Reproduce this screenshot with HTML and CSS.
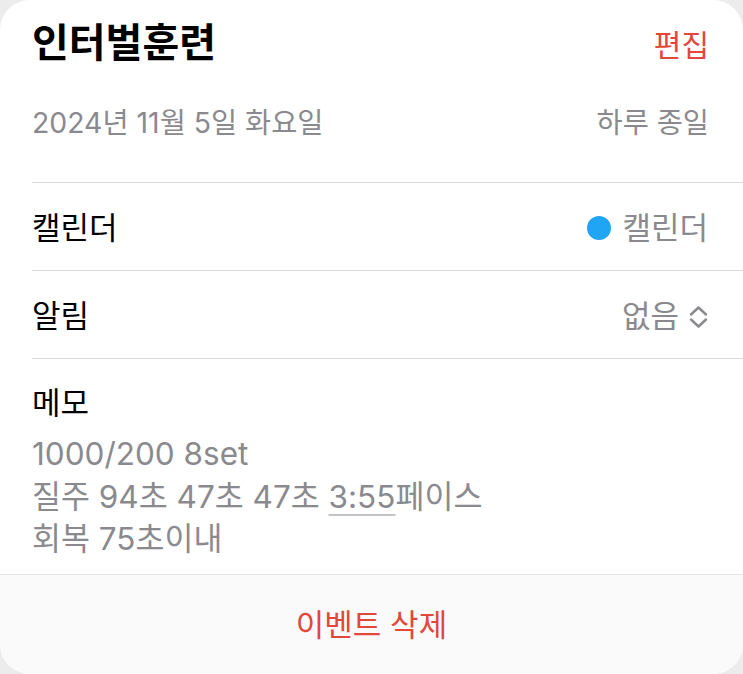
FILE: index.html
```html
<!DOCTYPE html>
<html lang="ko">
<head>
<meta charset="utf-8">
<link rel="stylesheet" href="styles.css">
</head>
<body>
<div class="sheet">
  <header class="head">
    <div class="title-row">
      <h1 class="title">인터벌훈련</h1>
      <span class="edit">편집</span>
    </div>
    <div class="date-row">
      <span>2024년 11월 5일 화요일</span>
      <span>하루 종일</span>
    </div>
  </header>
  <div class="list">
    <div class="row">
      <span class="label">캘린더</span>
      <span class="value"><span class="dot"></span>캘린더</span>
    </div>
    <div class="row">
      <span class="label">알림</span>
      <span class="value">없음<svg class="chev" viewBox="0 0 19 24" width="19" height="24"><path d="M2 9.5 L9.5 2.5 L17 9.5 M2 14.5 L9.5 21.5 L17 14.5" fill="none" stroke="#8a8a8e" stroke-width="2.4" stroke-linecap="round" stroke-linejoin="round"/></svg></span>
    </div>
    <div class="memo">
      <div class="label memo-label">메모</div>
      <div class="memo-text">
        <div>1000/200 8set</div>
        <div>질주 94초 47초 47초 <span class="u">3:55</span>페이스</div>
        <div>회복 75초이내</div>
      </div>
    </div>
  </div>
  <div class="footer">
    <span class="delete">이벤트 삭제</span>
  </div>
</div>
</body>
</html>
```

FILE: styles.css
```css
* { box-sizing: border-box; }
html, body { margin: 0; padding: 0; }
body {
  background: #ececec;
  font-family: Inter, "Noto Sans CJK KR", sans-serif;
  width: 743px;
  height: 674px;
  overflow: hidden;
}
.sheet {
  width: 743px;
  height: 674px;
  background: #fff;
  border-radius: 30px;
  display: flex;
  flex-direction: column;
  overflow: hidden;
}
.head {
  padding: 0 34px 0 32px;
  height: 182px;
}
.title-row {
  height: 88px;
  display: flex;
  align-items: center;
  justify-content: space-between;
}
.title {
  margin: 0;
  font-size: 40px;
  line-height: 48px;
  font-weight: 700;
  color: #000;
  letter-spacing: 0;
  margin-top: -3px;
}
.edit {
  color: #e2463c;
  font-size: 30px;
  line-height: 40px;
  margin-top: 2px;
}
.date-row {
  margin-top: 17px;
  height: 36px;
  display: flex;
  align-items: center;
  justify-content: space-between;
  color: #8a8a8e;
  font-size: 28.4px;
  line-height: 36px;
}
.list {
  margin-left: 32px;
  flex: 1;
  display: flex;
  flex-direction: column;
}
.row {
  height: 88px;
  border-top: 1px solid #d9d9d9;
  display: flex;
  align-items: center;
  justify-content: space-between;
  padding-right: 35px;
  padding-top: 2px;
}
.label {
  font-size: 31px;
  line-height: 40px;
  color: #000;
}
.value {
  font-size: 31px;
  line-height: 40px;
  color: #8a8a8e;
  display: flex;
  align-items: center;
}
.dot {
  width: 24px;
  height: 24px;
  border-radius: 50%;
  background: #1fa5f3;
  margin-right: 11px;
}
.chev {
  margin-left: 10px;
  margin-top: 2px;
}
.memo {
  border-top: 1px solid #d9d9d9;
  border-bottom: 1px solid #d9d9d9;
  height: 219px;
  padding-top: 24px;
}
.memo-label {
  line-height: 40px;
}
.memo-text {
  margin-top: 10px;
  font-size: 31.5px;
  color: #8a8a8e;
  line-height: 42.5px;
}
.u {
  text-decoration: underline;
  text-decoration-color: #c4c4c8;
  text-underline-offset: 6px;
  text-decoration-thickness: 1.5px;
}
.footer {
  height: 100px;
  margin-top: -3px;
  background: #fafafa;
  border-top: 1px solid #e4e4e4;
  display: flex;
  align-items: center;
  justify-content: center;
  border-radius: 0 0 30px 30px;
}
.delete {
  color: #e2463c;
  font-size: 31px;
  line-height: 40px;
}
```
